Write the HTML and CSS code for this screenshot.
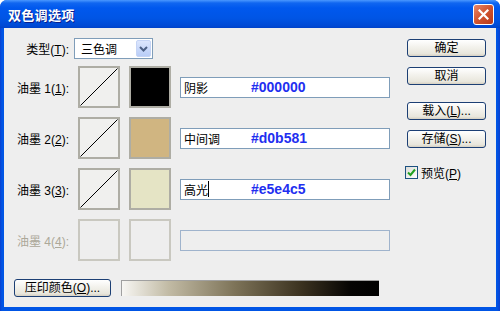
FILE: index.html
```html
<!DOCTYPE html>
<html lang="zh-CN">
  <head>
    <meta charset="UTF-8" />
    <meta name="viewport" content="width=device-width, initial-scale=1.0" />
    <title>双色调选项</title>
    <link rel="stylesheet" href="styles.css">
  </head>

  <body>
    <div class="window">
      <div class="titlebar">
        <span class="title">双色调选项</span>
        <button class="close-btn" aria-label="关闭">
          <svg width="11" height="11" viewBox="0 0 11 11">
            <path d="M1.5 1.5 L9.5 9.5 M9.5 1.5 L1.5 9.5" stroke="#fff" stroke-width="2.2" stroke-linecap="square" />
          </svg>
        </button>
      </div>

      <div class="dialog">
        <div class="main">
          <div class="type-row">
            <span class="label">类型(<u>T</u>):</span>
            <div class="select">
              <span class="select-value">三色调</span>
              <span class="select-arrow">
                <svg width="9" height="6" viewBox="0 0 9 6">
                  <path d="M1 1 L4.5 4.5 L8 1" fill="none" stroke="#4d6185" stroke-width="2" />
                </svg>
              </span>
            </div>
          </div>

          <div class="ink-row">
            <span class="label">油墨 1(<u>1</u>):</span>
            <div class="curve-box">
              <svg width="38" height="38" viewBox="0 0 38 38">
                <path d="M0.5 37.5 L37.5 0.5" stroke="#000" stroke-width="1" />
              </svg>
            </div>
            <div class="swatch swatch-black"></div>
            <div class="ink-field">
              <span class="ink-name">阴影</span>
              <span class="ink-hex">#000000</span>
            </div>
          </div>

          <div class="ink-row">
            <span class="label">油墨 2(<u>2</u>):</span>
            <div class="curve-box">
              <svg width="38" height="38" viewBox="0 0 38 38">
                <path d="M0.5 37.5 L37.5 0.5" stroke="#000" stroke-width="1" />
              </svg>
            </div>
            <div class="swatch swatch-tan"></div>
            <div class="ink-field">
              <span class="ink-name">中间调</span>
              <span class="ink-hex">#d0b581</span>
            </div>
          </div>

          <div class="ink-row">
            <span class="label">油墨 3(<u>3</u>):</span>
            <div class="curve-box">
              <svg width="38" height="38" viewBox="0 0 38 38">
                <path d="M0.5 37.5 L37.5 0.5" stroke="#000" stroke-width="1" />
              </svg>
            </div>
            <div class="swatch swatch-cream"></div>
            <div class="ink-field">
              <span class="ink-name">高光<span class="caret"></span></span>
              <span class="ink-hex">#e5e4c5</span>
            </div>
          </div>

          <div class="ink-row disabled">
            <span class="label">油墨 4(<u>4</u>):</span>
            <div class="curve-box"></div>
            <div class="swatch"></div>
            <div class="ink-field"></div>
          </div>

          <div class="overprint-row">
            <button class="xp-btn overprint-btn">压印颜色(<u>O</u>)...</button>
            <div class="ramp"></div>
          </div>
        </div>

        <div class="side">
          <button class="xp-btn">确定</button>
          <button class="xp-btn">取消</button>
          <button class="xp-btn btn-gap">载入(<u>L</u>)...</button>
          <button class="xp-btn">存储(<u>S</u>)...</button>
          <label class="preview">
            <span class="checkbox">
              <svg width="9" height="9" viewBox="0 0 9 9">
                <path d="M1 4.5 L3.5 7 L8 1.5" fill="none" stroke="#21a121" stroke-width="2" />
              </svg>
            </span>
            <span class="preview-text">预览(<u>P</u>)</span>
          </label>
        </div>
      </div>
    </div>
  </body>
</html>
```

FILE: styles.css
```css
body {
  margin: 0;
  font-family: "Liberation Sans", "Noto Sans CJK SC", sans-serif;
  font-size: 12px;
  color: #000;
}

.window {
  width: 500px;
  height: 311px;
  box-sizing: border-box;
  display: flex;
  flex-direction: column;
  background: linear-gradient(to right, #0a3fd0, #0055e5 2px, #0055e5 497px, #0a3fd0);
  border-radius: 7px 7px 0 0;
  overflow: hidden;
}

.titlebar {
  height: 28px;
  flex: none;
  display: flex;
  align-items: center;
  justify-content: space-between;
  padding: 0 6px 0 8px;
  background: linear-gradient(to bottom, #4a98ff 0, #1066f0 3px, #0058ee 8px, #0055e5 18px, #0049d4 26px, #0042c8 28px);
}

.title {
  color: #fff;
  font-family: "Noto Sans CJK SC", sans-serif;
  font-size: 13px;
  font-weight: bold;
  text-shadow: 1px 1px 0 #0a1e8c;
  letter-spacing: 0.3px;
}

.close-btn {
  width: 21px;
  height: 21px;
  padding: 0;
  display: flex;
  align-items: center;
  justify-content: center;
  border: 1px solid #fff;
  border-radius: 3px;
  background: linear-gradient(135deg, #e9876a, #d0532f 50%, #b8391a);
  margin-top: 1px;
}

.dialog {
  flex: 1;
  display: flex;
  margin: 0 4px 4px;
  background-color: #eeeeee;
}

.main {
  flex: 1;
  padding-top: 10px;
}

.label {
  width: 65px;
  flex: none;
  text-align: right;
}

.type-row {
  display: flex;
  align-items: center;
  gap: 5px;
  height: 21px;
}

.select {
  width: 79px;
  height: 21px;
  box-sizing: border-box;
  display: flex;
  align-items: center;
  justify-content: space-between;
  border: 1px solid #7f9db9;
  background-color: #fff;
  padding: 1px 1px 1px 6px;
}

.select-arrow {
  width: 15px;
  height: 17px;
  display: flex;
  align-items: center;
  justify-content: center;
  border-radius: 2px;
  background: linear-gradient(to bottom, #dce6fd, #b9cdf7);
  border: 1px solid #c5d4f5;
  box-sizing: border-box;
}

.ink-row {
  display: flex;
  align-items: center;
  gap: 9px;
  height: 42px;
  margin-top: 9px;
}

.type-row + .ink-row {
  margin-top: 7px;
}

.curve-box,
.swatch {
  width: 42px;
  height: 42px;
  box-sizing: border-box;
  flex: none;
  border: 2px solid #aeada4;
  background-color: #f0f0ee;
}

.swatch-black {
  background-color: #000000;
}

.swatch-tan {
  background-color: #d0b581;
}

.swatch-cream {
  background-color: #e5e4c5;
}

.ink-field {
  width: 210px;
  height: 21px;
  box-sizing: border-box;
  display: flex;
  align-items: center;
  border: 1px solid #7f9db9;
  background-color: #fff;
  padding-left: 3px;
}

.ink-name {
  width: 67px;
  flex: none;
  display: flex;
  align-items: center;
}

.caret {
  width: 1px;
  height: 16px;
  background-color: #000;
}

.ink-hex {
  font-size: 14px;
  font-weight: bold;
  color: #1f2ff0;
}

.disabled .label {
  color: #aca899;
}

.disabled .curve-box,
.disabled .swatch {
  border-color: #c9c8c0;
  background-color: #eeeeee;
}

.disabled .ink-field {
  border-color: #9fb3cc;
  background-color: #eeeeee;
}

.overprint-row {
  display: flex;
  align-items: center;
  gap: 10px;
  margin-top: 18px;
  padding-left: 10px;
}

.xp-btn {
  height: 18px;
  padding: 0;
  box-sizing: border-box;
  border: 1px solid #1c3f74;
  border-radius: 3px;
  background: linear-gradient(to bottom, #ffffff, #f4f3ee 40%, #e8e6dc 85%, #d6d0c2);
  font-family: "Liberation Sans", "Noto Sans CJK SC", sans-serif;
  font-size: 12px;
  color: #000;
  line-height: 16px;
}

.overprint-btn {
  width: 97px;
}

.ramp {
  width: 257px;
  height: 15px;
  border-top: 1px solid #a0a0a0;
  border-left: 1px solid #a0a0a0;
  background: linear-gradient(to right, #f7f6f3, #c2bba5 18%, #7d7358 44%, #3a311f 70%, #050403 89%, #000);
}

.side {
  width: 90px;
  flex: none;
  margin-right: 10px;
  padding-top: 11px;
  display: flex;
  flex-direction: column;
  align-items: flex-end;
}

.side .xp-btn {
  width: 79px;
  margin-bottom: 10px;
}

.side .btn-gap {
  margin-top: 7px;
}

.preview {
  align-self: flex-start;
  display: flex;
  align-items: center;
  gap: 3px;
  margin-top: 6px;
  padding-left: 9px;
}

.checkbox {
  width: 13px;
  height: 13px;
  box-sizing: border-box;
  display: flex;
  align-items: center;
  justify-content: center;
  border: 1px solid #1c5180;
  background: linear-gradient(135deg, #dcdcd7, #ffffff);
}
```
